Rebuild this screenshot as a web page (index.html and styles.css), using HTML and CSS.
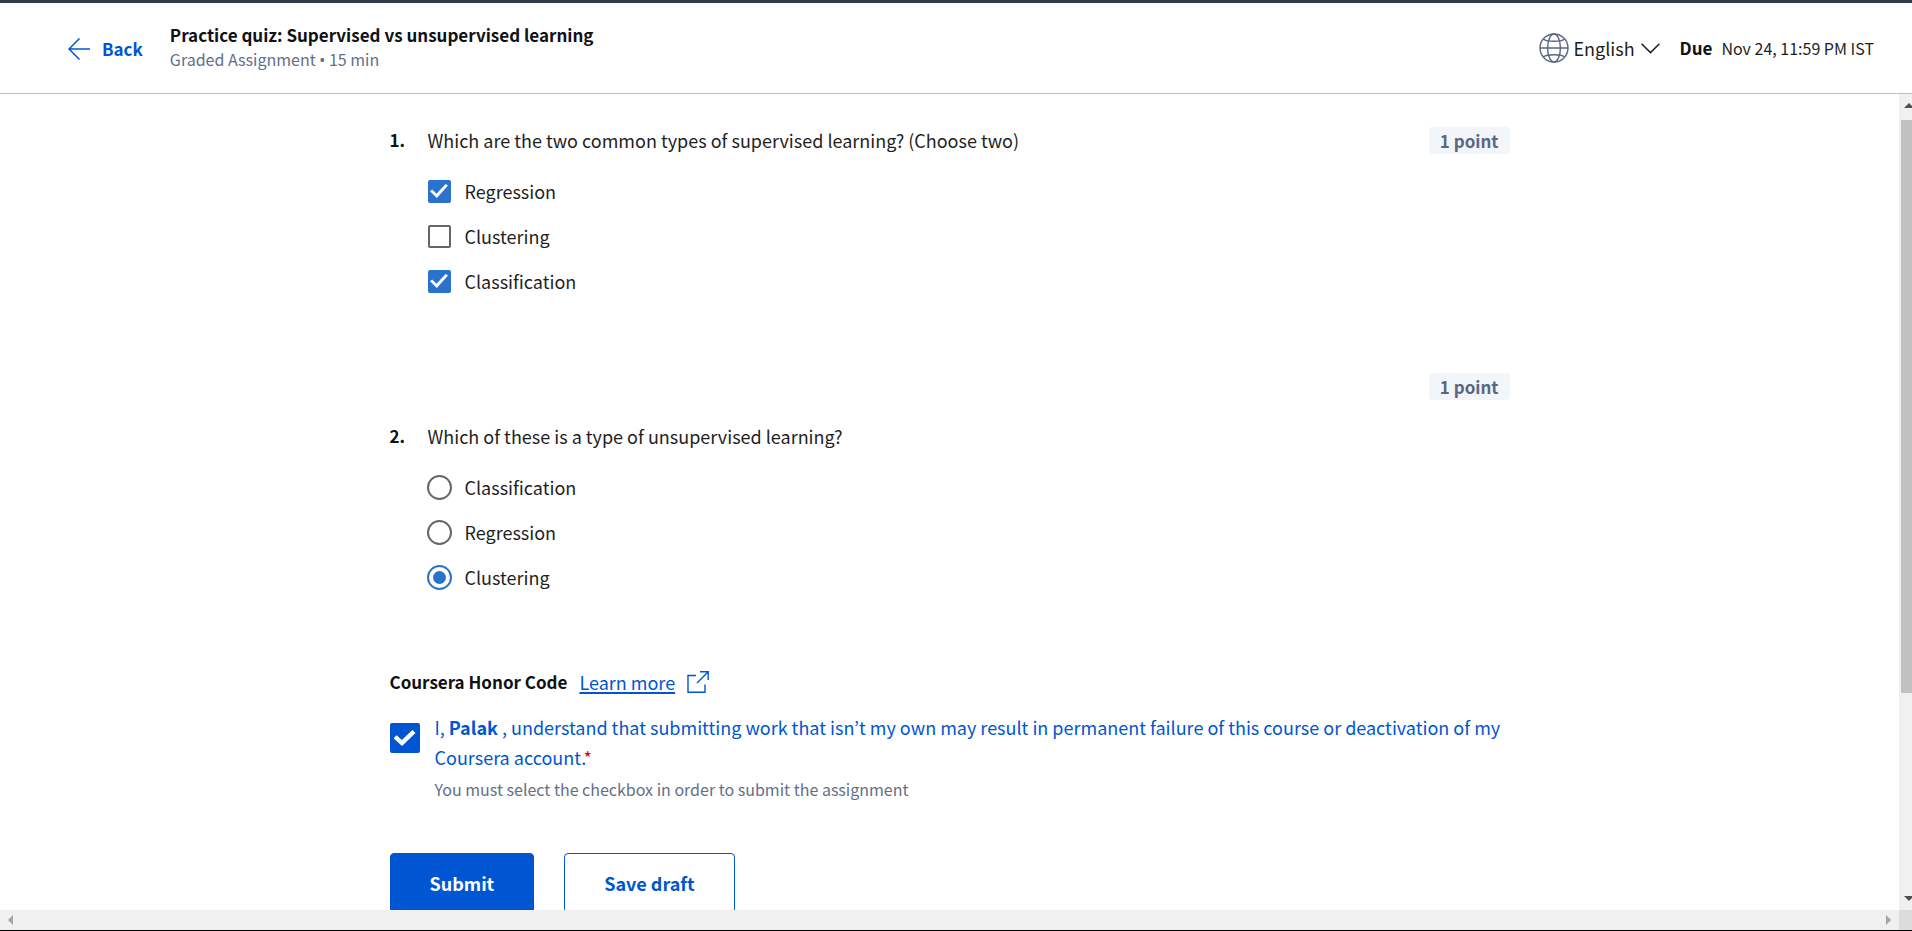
FILE: index.html
```html
<!DOCTYPE html>
<html lang="en">
<head>
<meta charset="utf-8">
<title>Practice quiz: Supervised vs unsupervised learning</title>
<link rel="stylesheet" href="styles.css">
</head>
<body class="page">
<header class="header">
  <a class="back" href="#">
    <svg class="back-icon" width="22" height="22" viewBox="0 0 22 22" fill="none" stroke="currentColor" stroke-width="1.5"><path d="M11.5 0.5L1 11L11.5 21.5M1 11H22"/></svg>
    Back
  </a>
  <div class="heading">
    <h1 class="title">Practice quiz: Supervised vs unsupervised learning</h1>
    <p class="subtitle">Graded Assignment <span class="bullet">•</span> 15 min</p>
  </div>
  <div class="language">
    <svg width="30" height="30" viewBox="0 0 30 30" fill="none" stroke="#5b6780" stroke-width="1.4"><circle cx="15" cy="15" r="14"/><ellipse cx="15" cy="15" rx="6.4" ry="14"/><path d="M1 15H29M4.5 6.2C8.5 9 21.5 9 25.5 6.2M4.5 23.8C8.5 21 21.5 21 25.5 23.8"/></svg>
    <select class="language-select" aria-label="Language"><option>English</option></select>
    <svg width="19" height="11" viewBox="0 0 19 11" fill="none" stroke="#1f1f1f" stroke-width="1.5"><path d="M0.6 0.8L9.5 9.6L18.4 0.8"/></svg>
  </div>
  <div class="due"><strong class="due-label">Due</strong><span class="due-date">Nov 24, 11:59 PM IST</span></div>
</header>
<div class="viewport">
  <main class="content">
    <form class="quiz">
      <fieldset class="question">
        <span class="number">1.</span>
        <p class="prompt">Which are the two common types of supervised learning? (Choose two)</p>
        <span class="points">1 point</span>
        <div class="options">
          <label class="option"><input class="box" type="checkbox" checked>Regression</label>
          <label class="option"><input class="box" type="checkbox">Clustering</label>
          <label class="option"><input class="box" type="checkbox" checked>Classification</label>
        </div>
      </fieldset>
      <fieldset class="question question-stacked">
        <span class="points">1 point</span>
        <span class="number">2.</span>
        <p class="prompt">Which of these is a type of unsupervised learning?</p>
        <div class="options">
          <label class="option"><input class="dot" type="radio" name="q2">Classification</label>
          <label class="option"><input class="dot" type="radio" name="q2">Regression</label>
          <label class="option"><input class="dot" type="radio" name="q2" checked>Clustering</label>
        </div>
      </fieldset>
      <section class="honor">
        <div class="honor-head">
          <h2 class="honor-title">Coursera Honor Code</h2>
          <a class="learn" href="#">Learn more</a>
          <svg class="external" width="22" height="22" viewBox="0 0 22 22" fill="none" stroke="#0056d2" stroke-width="1.4"><path d="M9 4.5H1V21.2H18V13.5M10 12L21 1M13 0.8H21.2V9"/></svg>
        </div>
        <div class="agree">
          <input class="box box-large" type="checkbox" id="agree" checked>
          <div class="agree-text">
            <label class="agree-label" for="agree">I, <strong>Palak</strong> , understand that submitting work that isn’t my own may result in permanent failure of this course or deactivation of my Coursera account.<span class="required">*</span></label>
            <p class="helper">You must select the checkbox in order to submit the assignment</p>
          </div>
        </div>
      </section>
      <div class="actions">
        <button class="button button-primary" type="button">Submit</button>
        <button class="button" type="button">Save draft</button>
      </div>
    </form>
  </main>
  <div class="scroll-y">
    <svg class="scroll-arrow" width="10" height="5" viewBox="0 0 10 5" fill="#505050"><path d="M0 5L5 0L10 5Z"/></svg>
    <div class="track"><div class="thumb"></div></div>
    <svg class="scroll-arrow" width="10" height="5" viewBox="0 0 10 5" fill="#505050"><path d="M0 0L5 5L10 0Z"/></svg>
  </div>
  <div class="scroll-x">
    <svg width="5" height="10" viewBox="0 0 5 10" fill="#a3a3a3"><path d="M5 0L0 5L5 10Z"/></svg>
    <svg width="5" height="10" viewBox="0 0 5 10" fill="#a3a3a3"><path d="M0 0L5 5L0 10Z"/></svg>
  </div>
  <div class="corner"></div>
</div>
</body>
</html>
```
FILE: styles.css
```css
* {
  box-sizing: border-box;
}

.page {
  display: flex;
  flex-direction: column;
  height: 100vh;
  margin: 0;
  overflow: hidden;
  border-top: 3px solid #323b4e;
  border-bottom: 1px solid #000;
  background: #fff;
  color: #1f1f1f;
  font-family: "Noto Sans CJK KR", "Noto Sans", sans-serif;
  font-size: 18px;
  line-height: 30px;
}

.title,
.subtitle,
.prompt,
.honor-title,
.helper {
  margin: 0;
}

.header {
  display: flex;
  align-items: center;
  flex: none;
  height: 91px;
  padding: 0 38px 0 68px;
  border-bottom: 1px solid #bdbdbd;
}

.back {
  display: flex;
  align-items: center;
  gap: 12px;
  padding-top: 1px;
  color: #0056d2;
  font-size: 17px;
  font-weight: 700;
  text-decoration: none;
}

.heading {
  flex: 1;
  margin-left: 27px;
  padding-bottom: 1px;
}

.title {
  color: #0f1114;
  font-size: 17px;
  font-weight: 700;
  line-height: 24px;
}

.subtitle {
  color: #636f88;
  font-size: 16px;
  line-height: 24px;
}

.bullet {
  font-family: "Noto Sans", sans-serif;
}

.language {
  display: flex;
  align-items: center;
  gap: 5px;
}

.language-select {
  appearance: none;
  padding: 0;
  border: 0;
  background: none;
  color: inherit;
  font: inherit;
}

.due {
  display: flex;
  gap: 9px;
  margin-left: 20px;
}

.due-label {
  color: #0f1114;
  font-size: 17px;
}

.due-date {
  font-size: 16px;
}

.viewport {
  display: grid;
  flex: 1;
  grid-template-columns: minmax(0, 1fr) 13px;
  grid-template-rows: minmax(0, 1fr) 20px;
  min-height: 0;
}

.content {
  overflow: hidden;
  padding: 31px 20% 0;
}

.quiz {
  max-width: 1120px;
  margin: 0 auto;
}

.question {
  display: grid;
  grid-template-columns: 38px 1fr auto;
  min-width: 0;
  margin: 0 0 75px;
  padding: 0;
  border: 0;
}

.number {
  color: #0f1114;
  font-size: 17px;
  font-weight: 700;
}

.points {
  align-self: start;
  margin-top: 2px;
  padding: 0 11px;
  border-radius: 4px;
  background: #f2f5fa;
  color: #5b6780;
  font-size: 17px;
  font-weight: 700;
  line-height: 27px;
}

.question-stacked .points {
  grid-column: 3;
  margin-bottom: 21px;
}

.question-stacked .number {
  grid-column: 1;
}

.options {
  display: grid;
  grid-column: 2;
  gap: 15px;
  padding-top: 21px;
}

.option {
  display: flex;
  align-items: center;
  gap: 14px;
}

.box,
.dot {
  display: grid;
  flex: none;
  place-items: center;
  width: 23px;
  height: 23px;
  margin: 0;
  appearance: none;
  border: 2px solid #666;
  border-radius: 2px;
}

.box:checked {
  border-color: #2a73cc;
  background: #2a73cc;
}

.box:checked::before {
  content: "";
  width: 18px;
  height: 14px;
  background: #fff;
  clip-path: polygon(0 52%, 12% 39%, 36% 70%, 87% 0, 100% 11%, 38% 100%);
}

.box-large {
  width: 30px;
  height: 30px;
  margin-top: 11px;
}

.box-large:checked {
  border-color: #0056d2;
  background: #0056d2;
}

.box-large:checked::before {
  width: 22px;
  height: 16px;
  clip-path: polygon(0 52%, 14% 33%, 38% 63%, 86% 0, 100% 18%, 39% 100%);
}

.dot {
  width: 25px;
  height: 25px;
  margin: 0 -1px;
  border-radius: 50%;
}

.dot:checked {
  border-color: #2a73cc;
}

.dot:checked::before {
  content: "";
  width: 13px;
  height: 13px;
  border-radius: 50%;
  background: #2a73cc;
}

.honor-head {
  display: flex;
  align-items: center;
}

.honor-title {
  color: #0f1114;
  font-size: 17px;
  font-weight: 700;
}

.learn {
  margin: 0 12px;
  color: #0056d2;
  text-decoration-thickness: 2px;
  text-underline-offset: 2px;
}

.agree {
  display: flex;
  align-items: flex-start;
  gap: 15px;
  margin-top: 15px;
}

.agree-label {
  display: block;
  color: #0056d2;
}

.required {
  color: #d6001c;
}

.helper {
  margin-top: 2px;
  color: #636f88;
  font-size: 16px;
}

.actions {
  display: flex;
  gap: 30px;
  margin-top: 49px;
}

.button {
  height: 60px;
  padding: 0 39px;
  border: 1px solid #0056d2;
  border-radius: 4px;
  background: #fff;
  color: #0056d2;
  font: inherit;
  font-weight: 700;
}

.button-primary {
  background: #0056d2;
  color: #fff;
}

.scroll-y {
  display: flex;
  flex-direction: column;
  padding: 9px 0;
  overflow: hidden;
  background: #f0f0f0;
}

.scroll-arrow {
  flex: none;
  margin-left: 5px;
}

.track {
  flex: 1;
  margin: 12px 0 12px 2px;
}

.thumb {
  height: 75%;
  background: #c1c1c1;
}

.scroll-x {
  display: flex;
  align-items: center;
  justify-content: space-between;
  padding: 0 8px;
  background: #f0f0f0;
}

.corner {
  background: #dcdcdc;
}
```
